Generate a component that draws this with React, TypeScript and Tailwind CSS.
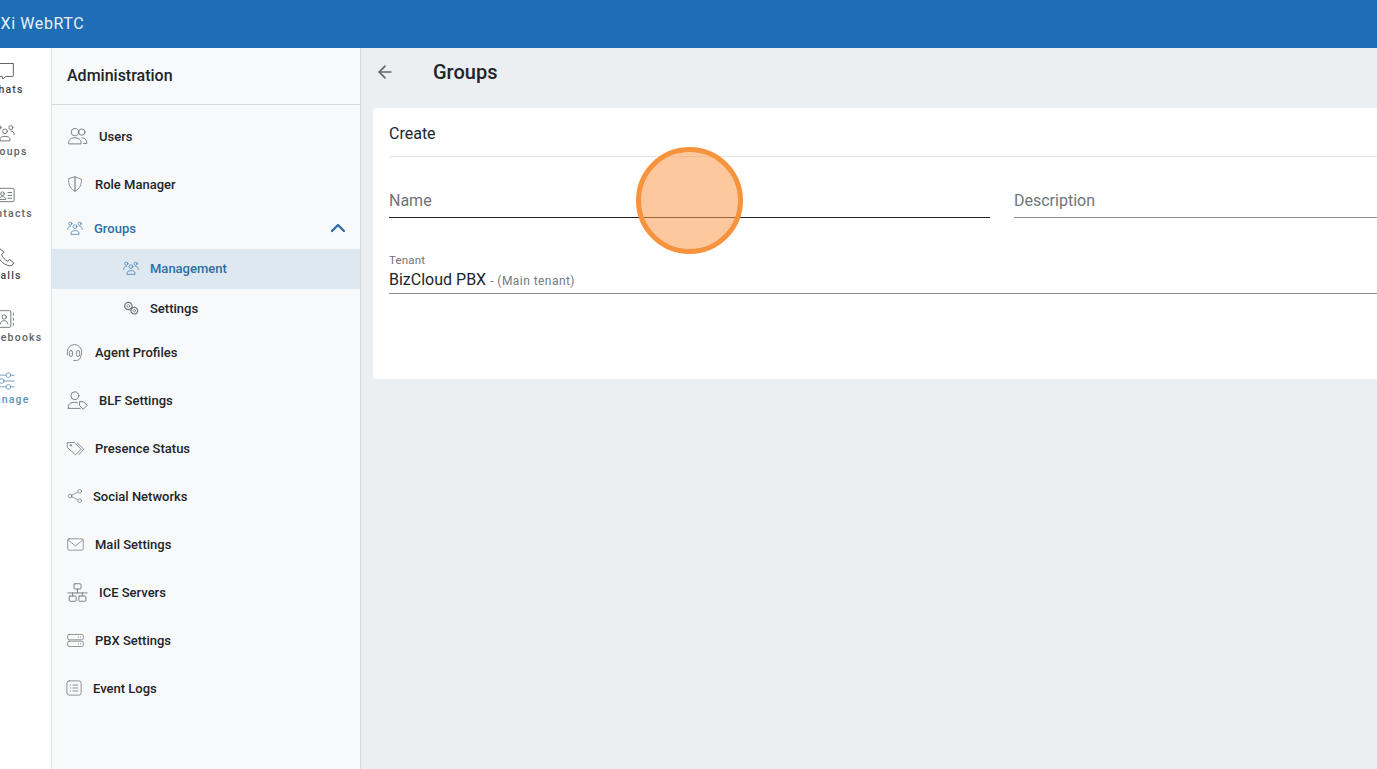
import React from 'react';
import { ArrowLeft, ChevronUp } from 'lucide-react';

const Svg = ({ className = '', children }: { className?: string; children: React.ReactNode }) => (
  <svg className={className} viewBox="0 0 24 24" fill="none" stroke="currentColor" strokeWidth="1" strokeLinecap="round" strokeLinejoin="round">
    {children}
  </svg>
);

const UsersIcon = ({ className }: { className?: string }) => (
  <Svg className={className}>
    <circle cx="9" cy="7" r="4.2" />
    <circle cx="17" cy="7" r="3.6" />
    <path d="M2 20v-1.500c0-3 3-5 7-5s7 2 7 5V20z" />
    <path d="M17 13.500c3.500 0 5.500 2.500 5.500 5V20H19" />
  </Svg>
);

const ShieldIcon = ({ className }: { className?: string }) => (
  <Svg className={className}>
    <path d="M12 2.500l8.500 3c.5 7-2 13-8.500 16-6.500-3-9-9-8.500-16z" />
    <path d="M12 2.500V21.500" strokeWidth="1.400" />
  </Svg>
);

const GroupsIcon = ({ className }: { className?: string }) => (
  <Svg className={className}>
    <circle cx="12" cy="10" r="2.800" />
    <circle cx="5" cy="5.500" r="2.400" />
    <circle cx="19" cy="5.500" r="2.400" />
    <path d="M6 21v-1.500c0-2 2-3.500 6-3.500s6 1.500 6 3.500V21z" />
    <path d="M1 14c0-2.500 1.500-4.500 4-4.500M23 14c0-2.500-1.500-4.500-4-4.500" />
  </Svg>
);

const GearsIcon = ({ className }: { className?: string }) => (
  <Svg className={className}>
    <circle cx="8" cy="9" r="5.500" strokeDasharray="2.500 1" strokeWidth="1.800" />
    <circle cx="8" cy="9" r="2" />
    <circle cx="17" cy="16" r="5" strokeDasharray="2.500 1" strokeWidth="1.800" />
    <circle cx="17" cy="16" r="1.800" />
  </Svg>
);

const HeadsetIcon = ({ className }: { className?: string }) => (
  <Svg className={className}>
    <path d="M3 15v-4a9 9 0 0 1 18 0v4" />
    <rect x="5.500" y="9.500" width="4" height="7.500" rx="2" />
    <rect x="14.500" y="9.500" width="4" height="7.500" rx="2" />
    <path d="M20 16c0 4-2.500 6-6 6h-3" />
  </Svg>
);

const UserTagIcon = ({ className }: { className?: string }) => (
  <Svg className={className}>
    <circle cx="9" cy="6.500" r="4.500" />
    <path d="M1.500 21v-2c0-3 3-5 7-5 1.500 0 2.500.2 3.500.6M1.500 21H15" />
    <path d="M15 13l4 .5 4 4-4.500 4.500-4-4z" />
  </Svg>
);

const TagsIcon = ({ className }: { className?: string }) => (
  <Svg className={className}>
    <path d="M2 4.500h8.500L19 13l-7 7-10-9z" />
    <circle cx="6" cy="8" r="1" />
    <path d="M14 4.500l8.500 8.500-6.500 7" />
  </Svg>
);

const ShareIcon = ({ className }: { className?: string }) => (
  <Svg className={className}>
    <circle cx="4.500" cy="12" r="2.800" />
    <circle cx="19" cy="5" r="2.800" />
    <circle cx="19" cy="19" r="2.800" />
    <path d="M7 10.800l9.500-4.600M7 13.200l9.500 4.600" />
  </Svg>
);

const MailIcon = ({ className }: { className?: string }) => (
  <Svg className={className}>
    <rect x="1" y="4" width="22" height="16" rx="2" />
    <path d="M1.500 5.500L12 14l10.500-8.500" />
  </Svg>
);

const NetworkIcon = ({ className }: { className?: string }) => (
  <Svg className={className}>
    <rect x="8" y="2" width="8" height="6" rx="1" />
    <path d="M12 8v4.500M1 12.500h22M6.500 12.500V16M17.500 12.500V16" />
    <rect x="2.500" y="16" width="8" height="6" rx="1" />
    <rect x="13.500" y="16" width="8" height="6" rx="1" />
  </Svg>
);

const ServerIcon = ({ className }: { className?: string }) => (
  <Svg className={className}>
    <rect x="1" y="3.500" width="22" height="7.500" rx="2" />
    <rect x="1" y="13" width="22" height="7.500" rx="2" />
    <path d="M16 7.200h.1M19 7.200h.1M16 16.700h.1M19 16.700h.1" strokeWidth="1.400" />
  </Svg>
);

const LogsIcon = ({ className }: { className?: string }) => (
  <Svg className={className}>
    <rect x="2.500" y="2.500" width="19" height="19" rx="3" />
    <path d="M7 8h.5M7 12h.5M7 16h.5M10.500 8H17M10.500 12H17M10.500 16H17" />
  </Svg>
);

const ChatIcon = ({ className }: { className?: string }) => (
  <Svg className={className}>
    <path d="M2 3h20v14.500a1 1 0 0 1-1 1H13l-3.500 3-1-3H3a1 1 0 0 1-1-1z" />
  </Svg>
);

const ContactCardIcon = ({ className }: { className?: string }) => (
  <Svg className={className}>
    <rect x="1" y="4" width="22" height="16" rx="1.500" />
    <circle cx="9" cy="10.500" r="2.200" />
    <path d="M5 17c0-2 1.800-3 4-3s4 1 4 3zM15.500 9H20M15.500 12.500H20M15.500 16H20" />
  </Svg>
);

const PhoneIcon = ({ className }: { className?: string }) => (
  <Svg className={className}>
    <path d="M5 2L2.500 4.500C2 10 5 15 9 18.500c3.500 3 8 4.500 11 4l2.500-3.500-5-4-2.500 2c-3-1.500-6-4.500-7-8l2.500-2.500z" />
  </Svg>
);

const PhonebookIcon = ({ className }: { className?: string }) => (
  <Svg className={className}>
    <rect x="3" y="2" width="16" height="20" rx="1.500" />
    <circle cx="11" cy="9.500" r="2.600" />
    <path d="M6.500 18c0-2.500 2-4 4.500-4s4.500 1.500 4.500 4M22 5v2.500M22 11v2.500M22 17v2.500" />
  </Svg>
);

const SlidersIcon = ({ className }: { className?: string }) => (
  <Svg className={className}>
    <path d="M1 5h12M19 5h4M1 12h4M11 12h12M1 19h12M19 19h4" />
    <circle cx="16" cy="5" r="2.800" />
    <circle cx="8" cy="12" r="2.800" />
    <circle cx="16" cy="19" r="2.800" />
  </Svg>
);

const railItems = [
  { label: 'Chats', Icon: ChatIcon, className: 'text-[#3f4449]' },
  { label: 'Groups', Icon: GroupsIcon, className: 'text-[#5d6368]' },
  { label: 'Contacts', Icon: ContactCardIcon, className: 'text-[#5d6368]' },
  { label: 'Calls', Icon: PhoneIcon, className: 'text-[#3f4449]' },
  { label: 'Phonebooks', Icon: PhonebookIcon, className: 'text-[#5d6368]' },
  { label: 'Manage', Icon: SlidersIcon, className: 'text-[#5b93bd]' },
];

const menuItems = [
  { label: 'Users', Icon: UsersIcon, slot: 'w-[32px]', icon: 'w-[21px] h-[21px]' },
  { label: 'Role Manager', Icon: ShieldIcon, slot: 'w-[28px]', icon: 'w-[18px] h-[18px] -ml-[1px]' },
];

const lowerItems = [
  { label: 'Agent Profiles', Icon: HeadsetIcon, slot: 'w-[28px]', icon: 'w-[19px] h-[19px] -ml-[2px]' },
  { label: 'BLF Settings', Icon: UserTagIcon, slot: 'w-[32px]', icon: 'w-[21px] h-[21px]' },
  { label: 'Presence Status', Icon: TagsIcon, slot: 'w-[28px]', icon: 'w-[19px] h-[19px] -ml-[1px]' },
  { label: 'Social Networks', Icon: ShareIcon, slot: 'w-[26px]', icon: 'w-[16px] h-[16px]' },
  { label: 'Mail Settings', Icon: MailIcon, slot: 'w-[28px]', icon: 'w-[17px] h-[17px]' },
  { label: 'ICE Servers', Icon: NetworkIcon, slot: 'w-[32px]', icon: 'w-[21px] h-[21px]' },
  { label: 'PBX Settings', Icon: ServerIcon, slot: 'w-[28px]', icon: 'w-[17px] h-[17px]' },
  { label: 'Event Logs', Icon: LogsIcon, slot: 'w-[26px]', icon: 'w-[18px] h-[18px] -ml-[2px]' },
];

const MenuRow = ({ label, Icon, slot, icon }: { label: string; Icon: React.ComponentType<{ className?: string }>; slot: string; icon: string }) => (
  <div className="flex h-12 items-center px-[15px]">
    <span className={`${slot} shrink-0 text-[#6b7075]`}>
      <Icon className={`${icon} block`} />
    </span>
    <span className="text-[13px] font-medium leading-none text-[#212529]">{label}</span>
  </div>
);

export default function App() {
  return (
    <div className="relative flex h-screen w-screen flex-col overflow-hidden bg-[#ebeff2] font-['Roboto',sans-serif] text-[#212529]">
      <header className="flex h-12 shrink-0 items-center overflow-hidden bg-[#1f6db4]">
        <span className="-ml-[20px] text-[16px] tracking-[0.6px] text-[#e6f1fa]">3CXi WebRTC</span>
      </header>

      <div className="flex min-h-0 flex-1">
        <nav className="w-[52px] shrink-0 overflow-hidden border-r border-[#e3e6e9] bg-white">
          <div className="-ml-[39px] flex w-[92px] flex-col pt-[13px]">
            {railItems.map(({ label, Icon, className }) => (
              <div key={label} className={`flex h-[62px] flex-col items-center ${className}`}>
                <Icon className="mr-[5px] h-5 w-5" />
                <span className="mt-[4px] text-[10.500px] font-medium leading-none tracking-[1.200px]">{label}</span>
              </div>
            ))}
          </div>
        </nav>

        <aside className="w-[309px] shrink-0 border-r border-[#d5dae0] bg-[#f8f9fb]">
          <div className="flex h-[57px] items-center border-b border-[#d5dae0] px-[15px] text-[16px] font-medium">
            Administration
          </div>
          <div className="pt-[7px]">
            {menuItems.map((item) => (
              <MenuRow key={item.label} {...item} />
            ))}
            <div className="flex h-[41px] items-center pb-[1px] px-[15px] text-[#2f6ea5]">
              <GroupsIcon className="h-[16px] w-[16px] shrink-0" />
              <span className="ml-[11px] flex-1 text-[13px] font-medium leading-none">Groups</span>
              <ChevronUp className="-mr-[5px] h-6 w-6" strokeWidth={2.400} />
            </div>
            <div className="flex h-10 items-center bg-[#dde8f1] pb-[2px] pl-[71px] text-[#2f6ea5]">
              <GroupsIcon className="h-[16px] w-[16px] shrink-0" />
              <span className="ml-[11px] text-[13px] font-medium leading-none">Management</span>
            </div>
            <div className="flex h-[39px] items-center pb-[1px] pl-[71px]">
              <GearsIcon className="h-[16px] w-[16px] shrink-0 text-[#6b7075]" />
              <span className="ml-[11px] text-[13px] font-medium leading-none">Settings</span>
            </div>
            {lowerItems.map((item) => (
              <MenuRow key={item.label} {...item} />
            ))}
          </div>
        </aside>

        <main className="min-w-0 flex-1 px-3">
          <div className="flex h-[48px] items-center pl-[2px]">
            <ArrowLeft className="h-5 w-5 text-[#5f6569]" strokeWidth={2} />
            <h1 className="ml-[38px] text-[20px] font-medium">Groups</h1>
          </div>
          <div className="mt-[12px] -mr-10 h-[271px] rounded bg-white px-4">
            <div className="flex h-[49px] items-center border-b border-[#e3e5e7] pt-[4px] text-[16px]">Create</div>
            <div className="flex gap-6 pt-[31px]">
              <div className="w-[601px] border-b border-[#212529] pb-[3px] text-[16px] leading-[26px] text-[#6f7478]">Name</div>
              <div className="flex-1 border-b border-[#8a8f93] pb-[3px] text-[16px] leading-[26px] text-[#6f7478]">Description</div>
            </div>
            <div className="mt-[36px] border-b border-[#8a8f93] pb-[2px]">
              <div className="text-[11.500px] leading-[13px] tracking-[0.2px] text-[#6f7478]">Tenant</div>
              <div className="mt-[3px] flex items-baseline leading-[20px]">
                <span className="text-[16px]">BizCloud PBX</span>
                <span className="ml-1 text-[12px] tracking-[0.45px] text-[#74797d]">- (Main tenant)</span>
              </div>
            </div>
          </div>
        </main>
      </div>

      {/* click highlight from the recording */}
      <div className="absolute left-[636px] top-[147px] h-[107px] w-[107px] rounded-full border-[5px] border-[#f7923d] bg-[#fb9a4f]/55" />
    </div>
  );
}
